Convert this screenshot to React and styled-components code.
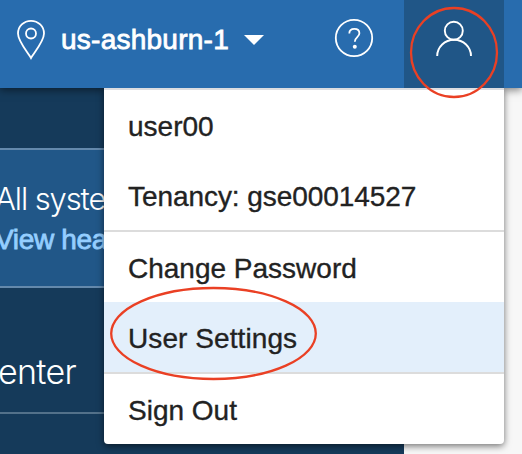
import React from 'react';
import styled, { createGlobalStyle } from 'styled-components';

const GlobalStyle = createGlobalStyle`
  *, *::before, *::after { box-sizing: border-box; }
  body { margin: 0; overflow: hidden; font-family: "Liberation Sans", Arial, sans-serif; }
`;

const Page = styled.div`
  position: relative;
  display: flex;
  flex-direction: column;
  width: 522px;
  height: 454px;
  overflow: hidden;
  background: #f7f7f7;
`;

const Header = styled.header`
  position: relative;
  z-index: 2;
  display: flex;
  align-items: flex-start;
  flex: 0 0 88px;
  background: #286cae;
  box-shadow: 0 2px 8px rgba(0, 0, 0, 0.5);
`;

const Region = styled.button`
  display: flex;
  align-items: flex-start;
  width: 304px;
  height: 88px;
  padding: 18px 0 0 16px;
  border: 0;
  background: none;
  color: #fff;
  font-family: inherit;
`;

const RegionName = styled.span`
  margin: 6px 0 0 15px;
  width: 167px;
  font-size: 28px;
  line-height: 32px;
  letter-spacing: 0.25px;
  text-align: left;
  white-space: nowrap;
  -webkit-text-stroke: 0.8px #fff;
`;

const Caret = styled.svg`
  flex: none;
  margin: 17px 0 0 16px;
`;

const HelpButton = styled.button`
  display: flex;
  justify-content: center;
  width: 100px;
  height: 88px;
  padding: 18px 0 0;
  border: 0;
  background: none;
`;

const ProfileButton = styled(HelpButton)`
  background: #205687;
`;

const Body = styled.main`
  flex: 1;
  display: flex;
`;

const Sidebar = styled.aside`
  width: 404px;
  background: #153a5a;
  color: #fff;
`;

const Spacer = styled.div`
  height: 60px;
`;

const Status = styled.section`
  height: 140px;
  padding-top: 29px;
  border-top: 2px solid #6489ac;
  border-bottom: 2px solid #6489ac;
  background: #215788;
`;

const LightText = styled.div`
  margin-left: ${(p) => p.$left};
  font-family: Inter, sans-serif;
  font-weight: 300;
  font-size: ${(p) => p.$size};
  line-height: 40px;
  letter-spacing: ${(p) => p.$spacing};
  white-space: nowrap;
`;

const HealthLink = styled.a`
  display: block;
  margin: 2px 0 0 -5px;
  color: #94ceff;
  font-size: 28px;
  line-height: 38px;
  letter-spacing: -0.35px;
  white-space: nowrap;
  -webkit-text-stroke: 0.8px #94ceff;
`;

const Center = styled.section`
  height: 126px;
  padding-top: 64px;
  border-bottom: 2px solid #53718a;
`;

const Menu = styled.nav`
  position: absolute;
  z-index: 3;
  top: 88px;
  left: 104px;
  width: 400px;
  border-top: 2px solid #dcdde1;
  border-radius: 0 0 4px 4px;
  background: #fff;
  clip-path: inset(0 -20px -20px -20px);
  box-shadow: 0 2px 7px rgba(0, 0, 0, 0.55);
`;

const MenuItem = styled.div`
  height: 70px;
  padding: 0 24px;
  background: ${(p) => (p.$active ? '#e3effb' : 'transparent')};
  color: #222;
  font-size: 28px;
  line-height: 74px;
  letter-spacing: ${(p) => p.$spacing || '0'};
  white-space: nowrap;
  -webkit-text-stroke: 0.35px #222;
`;

const Divider = styled.div`
  height: 2px;
  background: #dcdcdc;
`;

const Annotations = styled.svg`
  position: absolute;
  z-index: 4;
  inset: 0;
  pointer-events: none;
`;

const PinIcon = () => (
  <svg width="30" height="42" viewBox="0 0 30 42" fill="none" stroke="#fff" strokeWidth="1.8">
    <path d="M15 40C12 34.5 2 23.5 2 15.5C2 8.2 7.8 2.8 15 2.8S28 8.2 28 15.5C28 23.5 18 34.5 15 40Z" />
    <circle cx="15" cy="15.5" r="5" />
  </svg>
);

const HelpIcon = () => (
  <svg width="40" height="40" viewBox="0 0 40 40" fill="none" stroke="#fff" strokeWidth="1.8">
    <circle cx="20" cy="20" r="18.2" />
    <path d="M15.3 15.5C15.3 12.6 17.5 10.9 20.4 10.9C23.3 10.9 25.4 12.6 25.4 15.3C25.4 19.2 20.8 19 20.8 23.7" />
    <circle cx="20.8" cy="28.8" r="2" fill="#fff" stroke="none" />
  </svg>
);

const PersonIcon = () => (
  <svg width="40" height="40" viewBox="0 0 40 40" fill="none" stroke="#fff" strokeWidth="1.9">
    <circle cx="19.8" cy="12.8" r="9" />
    <path d="M3.2 38A16.8 16.2 0 0 1 37 38" />
  </svg>
);

export default function App() {
  return (
    <>
      <GlobalStyle />
      <Page>
        <Header>
          <Region>
            <PinIcon />
            <RegionName>us-ashburn-1</RegionName>
            <Caret width="20" height="11" viewBox="0 0 20 11">
              <path d="M0 0H20L10 10Z" fill="#fff" />
            </Caret>
          </Region>
          <HelpButton aria-label="Help">
            <HelpIcon />
          </HelpButton>
          <ProfileButton aria-label="Profile">
            <PersonIcon />
          </ProfileButton>
        </Header>
        <Body>
          <Sidebar>
            <Spacer />
            <Status>
              <LightText $left="-5px" $size="31px" $spacing="-1.1px">All syste</LightText>
              <HealthLink>View hea</HealthLink>
            </Status>
            <Center>
              <LightText $left="-2px" $size="34px" $spacing="-0.7px">enter</LightText>
            </Center>
          </Sidebar>
        </Body>
        <Menu>
          <MenuItem>user00</MenuItem>
          <MenuItem $spacing="-0.06px">Tenancy: gse00014527</MenuItem>
          <Divider />
          <MenuItem>Change Password</MenuItem>
          <MenuItem $active $spacing="0.08px">User Settings</MenuItem>
          <Divider />
          <MenuItem>Sign Out</MenuItem>
        </Menu>
        <Annotations width="522" height="454" fill="none" stroke="#ea4024" strokeWidth="2.3">
          <ellipse cx="454" cy="52.5" rx="43" ry="44.5" />
          <ellipse cx="213.5" cy="333.5" rx="102.3" ry="45.5" />
        </Annotations>
      </Page>
    </>
  );
}
